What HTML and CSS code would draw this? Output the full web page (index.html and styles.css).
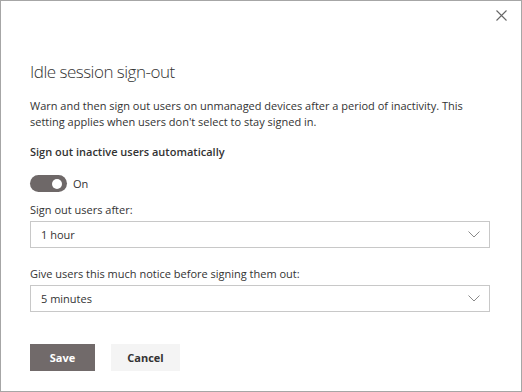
FILE: index.html
```html
<!DOCTYPE html>
<html lang="en">
<head>
    <meta charset="UTF-8">
    <meta name="viewport" content="width=device-width, initial-scale=1.0">
    <title>Idle session sign-out</title>
    <link rel="stylesheet" href="styles.css">
</head>
<body>
    <div class="dialog">
        <div class="dialog-header">
            <button class="close" type="button" aria-label="Close">
                <svg width="11" height="11" viewBox="0 0 11 11">
                    <path d="M0.5 0.5 L10.5 10.5 M10.5 0.5 L0.5 10.5" stroke="#666" stroke-width="1.1" fill="none"/>
                </svg>
            </button>
        </div>

        <h1 class="title">Idle session sign-out</h1>
        <p class="desc">Warn and then sign out users on unmanaged devices after a period of inactivity. This setting applies when users don't select to stay signed in.</p>

        <div class="label strong">Sign out inactive users automatically</div>
        <div class="toggle-row">
            <span class="toggle"><span class="knob"></span></span>
            <span class="toggle-text">On</span>
        </div>

        <div class="label">Sign out users after:</div>
        <div class="select">
            <span>1 hour</span>
            <svg class="chevron" width="12" height="7" viewBox="0 0 12 7">
                <path d="M0.5 0.5 L6 6 L11.5 0.5" stroke="#8a8a8a" stroke-width="1" fill="none"/>
            </svg>
        </div>

        <div class="label">Give users this much notice before signing them out:</div>
        <div class="select">
            <span>5 minutes</span>
            <svg class="chevron" width="12" height="7" viewBox="0 0 12 7">
                <path d="M0.5 0.5 L6 6 L11.5 0.5" stroke="#8a8a8a" stroke-width="1" fill="none"/>
            </svg>
        </div>

        <div class="actions">
            <button class="btn btn-primary" type="button">Save</button>
            <button class="btn" type="button">Cancel</button>
        </div>
    </div>
</body>
</html>
```

FILE: styles.css
```css
/* General */
body {
    font-family: "Segoe UI", "Open Sans", sans-serif;
    margin: 0;
    padding: 0;
    background-color: #fff;
    color: #333;
}

.dialog {
    box-sizing: border-box;
    width: 522px;
    height: 392px;
    border: 1px solid #a6a6a6;
    padding: 0 31px 0 29px;
    display: flex;
    flex-direction: column;
}

/* Header with close button */
.dialog-header {
    display: flex;
    justify-content: flex-end;
    height: 30px;
    margin-right: -17px;
}

.close {
    background: none;
    border: none;
    padding: 0;
    margin-top: 9px;
    width: 11px;
    height: 11px;
    cursor: pointer;
}

.close svg {
    display: block;
}

.title {
    font-size: 17px;
    font-weight: 300;
    line-height: 24px;
    letter-spacing: -0.5px;
    margin: 29px 0 0;
    color: #333;
}

.desc {
    font-size: 11px;
    line-height: 16px;
    margin: 14px 0 0;
}

.label {
    font-size: 11px;
    line-height: 16px;
}

.strong {
    font-weight: 600;
    margin-top: 14px;
}

/* Toggle */
.toggle-row {
    display: flex;
    align-items: center;
    gap: 6px;
    margin-top: 15px;
    font-size: 11px;
}

.toggle {
    box-sizing: border-box;
    width: 37px;
    height: 17px;
    border-radius: 9px;
    background-color: #6e6868;
    display: flex;
    align-items: center;
    justify-content: flex-end;
    padding-right: 5px;
}

.knob {
    width: 10px;
    height: 10px;
    border-radius: 50%;
    background-color: #fff;
}

.toggle-row + .label {
    margin-top: 10px;
}

/* Dropdowns */
.select {
    box-sizing: border-box;
    height: 27px;
    margin-top: 3px;
    border: 1px solid #c8c8c8;
    display: flex;
    align-items: center;
    justify-content: space-between;
    padding: 0 9px 0 10px;
    font-size: 11px;
}

.select + .label {
    margin-top: 18px;
}

/* Buttons */
.actions {
    display: flex;
    gap: 16px;
    margin-top: 32px;
}

.btn {
    font-family: inherit;
    font-size: 11px;
    font-weight: 700;
    height: 27px;
    border: none;
    padding: 0;
    width: 69px;
    background-color: #f4f4f4;
    color: #333;
    cursor: pointer;
}

.btn-primary {
    width: 65px;
    background-color: #716a6a;
    color: #fff;
}
```
